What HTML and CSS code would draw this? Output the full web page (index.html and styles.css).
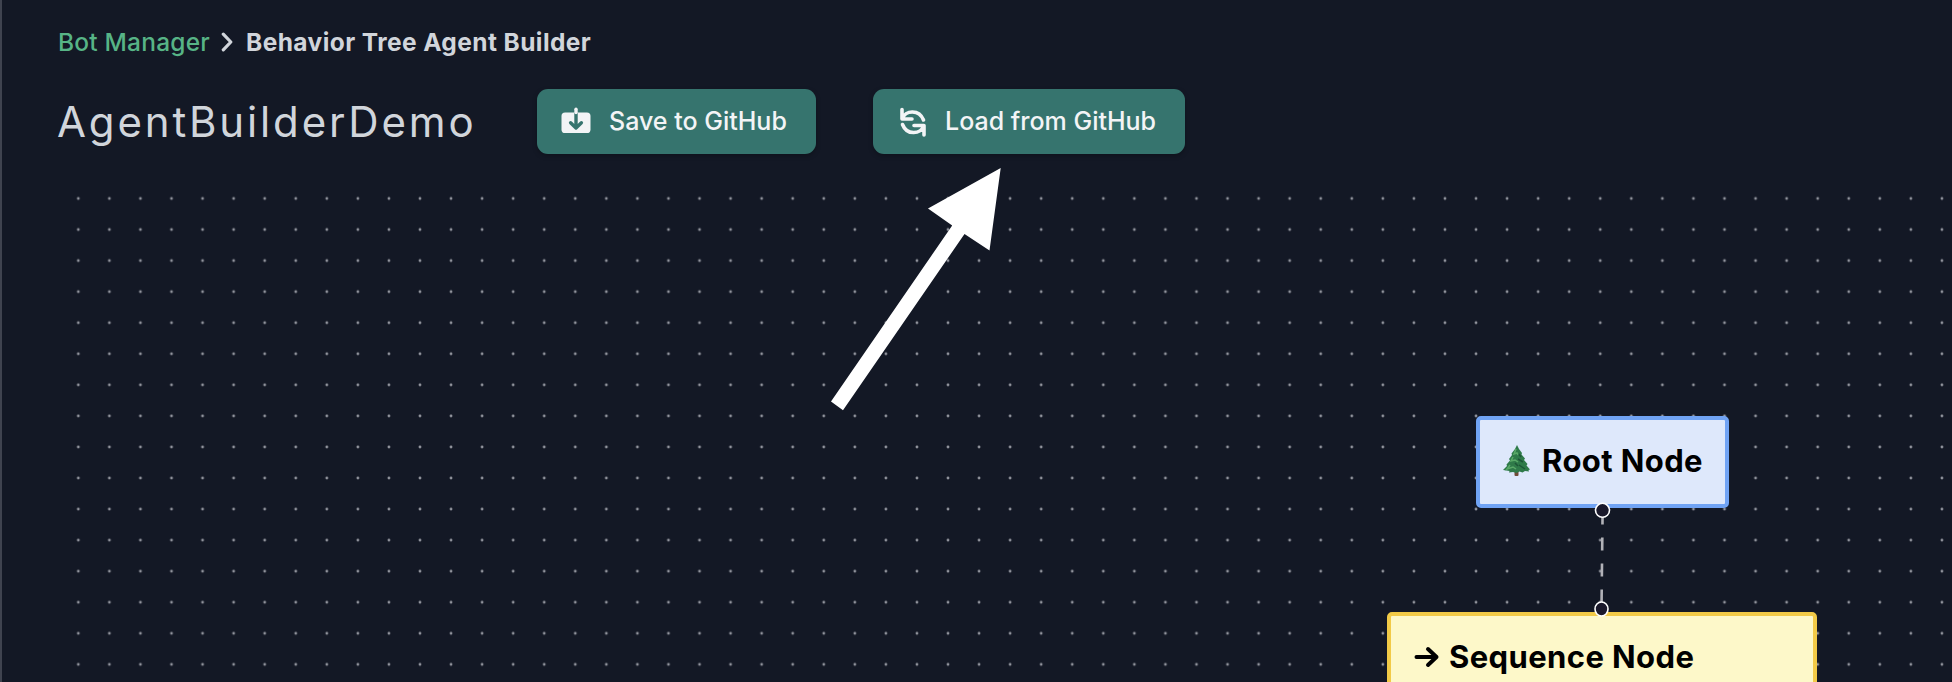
FILE: index.html
```html
<!DOCTYPE html>
<html lang="en">
<head>
<meta charset="utf-8">
<title>Behavior Tree Agent Builder</title>
<link rel="stylesheet" href="styles.css">
</head>
<body>
<main class="page">
  <nav class="breadcrumb">
    <a class="crumb-link">Bot Manager</a>
    <svg class="chevron" width="12" height="20" viewBox="0 0 12 20"><path d="M2.300 2.200 9.800 10l-7.500 7.800"/></svg>
    <span class="crumb-current">Behavior Tree Agent Builder</span>
  </nav>
  <header class="toolbar">
    <h1 class="title">AgentBuilderDemo</h1>
    <button class="btn btn-save">
      <svg class="icon" width="32" height="32" viewBox="0 0 32 32">
        <rect class="solid" x="1.500" y="6.500" width="29" height="20.500" rx="3.600"/>
        <path class="cut" d="M16 7v14.500M10.600 16.700 16 22l5.400-5.300"/>
        <path class="stem" d="M16 3.200V6.500"/>
      </svg>
      <span class="save-label">Save to GitHub</span>
    </button>
    <button class="btn btn-load">
      <svg class="icon" width="32" height="32" viewBox="0 0 32 32">
        <path class="line" d="M5 3.500v9.500h10M5.500 12.500C8 4.500 22 2.500 26.500 14"/>
        <path class="line" d="M27 29v-9.500H17M26.500 20C24 28 10 30 5.500 18.500"/>
      </svg>
      <span class="load-label">Load from GitHub</span>
    </button>
  </header>
  <section class="canvas">
    <svg class="grid" width="1952" height="502">
      <defs>
        <pattern id="dots" x="62.800" y="2.970" width="31.060" height="31.060" patternUnits="userSpaceOnUse">
          <circle cx="15.530" cy="15.530" r="1.400"/>
        </pattern>
      </defs>
      <rect x="62.800" y="0" width="1890" height="502" fill="url(#dots)"/>
    </svg>
    <article class="node root">
      <svg class="tree" width="27" height="31" viewBox="0 0 27 31">
        <rect class="trunk" x="11.500" y="25" width="4" height="6" rx="1"/>
        <path class="tree-dark" d="M14 0l2 4 3 4-.5 1.500 3.500 4-1 1.500 3.500 4-1 1.500 3.500 4-1.500.5.500 1.500-4-.5-2.500 1.500-3-1-3 1.500-3.500-1-4 .5.500-1.500L0 25l4-4-.500-1.500L7 15.500 6 14l3-4-.5-1.500L12 4z"/>
        <path class="tree-light" d="M13 4l-2 5 3-1 1 2M10 12l-2 4 4-1 3 2M7 20l-3 4 6-2 3 2"/>
        <path class="tree-shade" d="M16 9l2 3M15 14l5 3M16 20l6 4M12 18l3 3"/>
      </svg>
      <span class="root-label">Root Node</span>
    </article>
    <article class="node sequence">
      <svg class="arrow-icon" width="26" height="22" viewBox="0 0 26 22"><path d="M2.500 11h20M14 3l8.500 8L14 19"/></svg>
      <span class="seq-label">Sequence Node</span>
    </article>
    <svg class="edges" width="1952" height="502">
      <path class="edge" d="M1602.600 332.500l-1.100 96"/>
      <circle class="port" cx="1602.500" cy="330.300" r="7"/>
      <ellipse class="port" cx="1601.500" cy="429" rx="6.500" ry="7"/>
    </svg>
  </section>
  <svg class="pointer" width="1952" height="682"><path d="M1000.700 168 928 208.500 952.200 225.500 831 401.500 843 410.200 964.500 234 989.500 250.500z"/></svg>
</main>
</body>
</html>
```
FILE: styles.css
```css
* { box-sizing: border-box; }
body { margin: 0; background: #131825; }
.page {
  position: relative;
  width: 1952px;
  height: 682px;
  overflow: hidden;
  border-left: 2px solid #3f434f;
  font-family: Inter, "Liberation Sans", sans-serif;
  color: #d1d5db;
}
.breadcrumb {
  display: flex;
  align-items: center;
  height: 60px;
  padding: 24px 0 0 56px;
  font-size: 24.5px;
  line-height: 36px;
  white-space: nowrap;
}
.crumb-link { width: 163px; color: #57b486; font-weight: 450; letter-spacing: .2px; }
.chevron { margin-right: 13px; fill: none; stroke: #d1d5db; stroke-width: 3.200; stroke-linecap: round; stroke-linejoin: round; }
.crumb-current { font-weight: 700; letter-spacing: .42px; }
.toolbar { display: flex; align-items: center; height: 120px; padding: 3px 0 0 55px; }
.title { width: 480px; margin: 0; font-size: 42px; font-weight: 430; line-height: 60px; letter-spacing: 2.850px; }
.btn {
  display: flex;
  align-items: center;
  height: 65px;
  padding: 0 0 0 23px;
  gap: 17px;
  border: 0;
  border-radius: 11px;
  background: #36746e;
  color: #f3f4f6;
  font: 500 25px/32px Inter, sans-serif;
  white-space: nowrap;
  box-shadow: 0 2px 5px rgba(0, 0, 0, .25);
}
.btn span { padding-bottom: 2px; }
.btn-save { width: 279px; }
.btn-load { width: 312px; margin-left: 57px; padding-left: 24px; gap: 16px; }
.icon { flex: none; }
.solid { fill: #f3f4f6; }
.cut { fill: none; stroke: #36746e; stroke-width: 3.400; stroke-linecap: round; stroke-linejoin: round; }
.stem { stroke: #f3f4f6; stroke-width: 3.400; stroke-linecap: round; }
.line { fill: none; stroke: #f3f4f6; stroke-width: 3.600; stroke-linecap: round; stroke-linejoin: round; }
.canvas { position: relative; height: 502px; margin-left: -2px; }
.grid, .edges { position: absolute; left: 0; top: 0; }
.grid circle { fill: #92959e; }
.node { position: absolute; display: flex; color: #000; font-size: 31px; font-weight: 700; line-height: 40px; letter-spacing: .4px; white-space: nowrap; }
.root { left: 1476px; top: 236px; width: 253px; height: 92px; padding: 21px 0 0 23px; border: 4px solid #70a3f4; border-radius: 5px; background: #dee8fb; }
.tree { margin: 4px 12px 0 0; }
.trunk { fill: #704b38; }
.tree-dark { fill: #2f7a49; }
.tree-light { fill: none; stroke: #5aa968; stroke-width: 1.500; }
.tree-shade { fill: none; stroke: #1d5637; stroke-width: 1.500; }
.sequence { left: 1387px; top: 431.500px; width: 430px; height: 140px; padding: 21px 0 0 23px; border: 4px solid #f2ca47; border-radius: 5px; background: #fdf8c9; }
.arrow-icon { margin: 9px 9px 0 0; fill: none; stroke: #000; stroke-width: 4; stroke-linecap: round; stroke-linejoin: round; }
.edge { fill: none; stroke: #b1b1b7; stroke-width: 2.600; stroke-dasharray: 13; stroke-dashoffset: 1; }
.port { fill: #1a192b; stroke: #fff; stroke-width: 1.600; }
.pointer { position: absolute; left: -2px; top: 0; fill: #fff; }
```
